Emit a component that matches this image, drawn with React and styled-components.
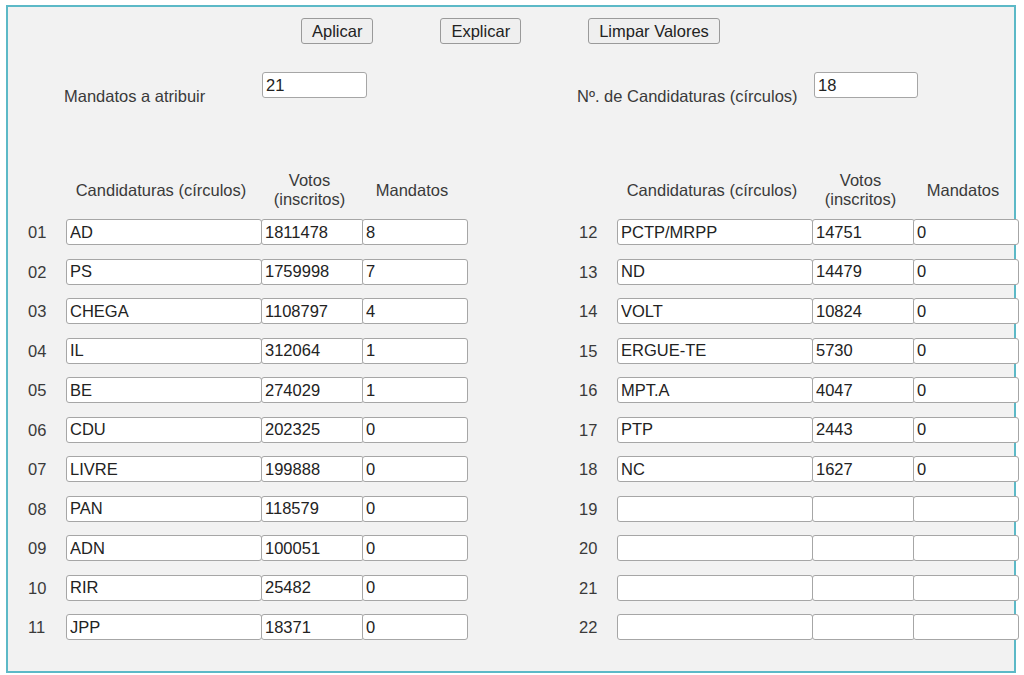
import React from 'react';
import styled, { createGlobalStyle } from 'styled-components';

const GlobalStyle = createGlobalStyle`
  body {
    margin: 0;
    background: #ffffff;
    font-family: "Liberation Sans", Arial, sans-serif;
  }
`;

const Panel = styled.div`
  box-sizing: border-box;
  margin: 5px 0 0 6px;
  width: 1010px;
  height: 668px;
  border: 2px solid #5cb9c7;
  background: #f2f2f2;
  padding-top: 11px;
  color: #3a3a3a;
  font-size: 16.5px;
`;

const ButtonBar = styled.div`
  display: flex;
  padding-left: 293px;
  gap: 67px;
`;

const Button = styled.button`
  box-sizing: border-box;
  height: 26px;
  padding: 0 10px;
  font-family: "Liberation Sans", Arial, sans-serif;
  font-size: 16.5px;
  color: #222;
  background: #efefef;
  border: 1px solid #9a9a9a;
  border-radius: 3px;
`;

const SettingsRow = styled.div`
  display: flex;
  margin-top: 28px;
  padding-left: 56px;
`;

const Setting = styled.div`
  display: flex;
  align-items: flex-start;
  margin-left: ${p => p.$offset || 0}px;
`;

const SettingLabel = styled.span`
  width: ${p => p.$width}px;
  margin-top: 15px;
  line-height: 19px;
`;

const TextBox = styled.input`
  box-sizing: border-box;
  width: ${p => p.$width ? `${p.$width}px` : '100%'};
  height: 26px;
  padding: 0 3px;
  font-family: "Liberation Sans", Arial, sans-serif;
  font-size: 16.5px;
  color: #222;
  background: #fff;
  border: 1px solid #a6a6a6;
  border-radius: 3px;
  outline: none;
`;

const Columns = styled.div`
  display: flex;
  gap: 112px;
  margin-top: 65px;
  padding-left: 20px;
`;

const Table = styled.div`
  display: flex;
  flex-direction: column;
`;

const Header = styled.div`
  display: grid;
  grid-template-columns: 38px 196px 101px 104px;
  align-items: center;
  height: 38px;
`;

const HeadCell = styled.div`
  text-align: center;
  line-height: 19px;
  padding-right: 6px;
`;

const Body = styled.div`
  display: grid;
  grid-template-columns: 38px 196px 101px 104px;
  row-gap: 13.5px;
  margin-top: 10px;
  align-items: center;
`;

const RowNum = styled.span`
  line-height: 26px;
`;

const Cell = styled.div`
  margin-left: ${p => p.$join ? '-1px' : '0'};
`;

const left = [
  ['01', 'AD', '1811478', '8'],
  ['02', 'PS', '1759998', '7'],
  ['03', 'CHEGA', '1108797', '4'],
  ['04', 'IL', '312064', '1'],
  ['05', 'BE', '274029', '1'],
  ['06', 'CDU', '202325', '0'],
  ['07', 'LIVRE', '199888', '0'],
  ['08', 'PAN', '118579', '0'],
  ['09', 'ADN', '100051', '0'],
  ['10', 'RIR', '25482', '0'],
  ['11', 'JPP', '18371', '0'],
];

const right = [
  ['12', 'PCTP/MRPP', '14751', '0'],
  ['13', 'ND', '14479', '0'],
  ['14', 'VOLT', '10824', '0'],
  ['15', 'ERGUE-TE', '5730', '0'],
  ['16', 'MPT.A', '4047', '0'],
  ['17', 'PTP', '2443', '0'],
  ['18', 'NC', '1627', '0'],
  ['19', '', '', ''],
  ['20', '', '', ''],
  ['21', '', '', ''],
  ['22', '', '', ''],
];

const PartyTable = ({ rows }) => (
  <Table>
    <Header>
      <span />
      <HeadCell>Candidaturas (círculos)</HeadCell>
      <HeadCell>Votos<br />(inscritos)</HeadCell>
      <HeadCell>Mandatos</HeadCell>
    </Header>
    <Body>
      {rows.map(([n, name, votes, seats]) => (
        <React.Fragment key={n}>
          <RowNum>{n}</RowNum>
          <Cell><TextBox defaultValue={name} /></Cell>
          <Cell $join><TextBox defaultValue={votes} style={{ width: 'calc(100% + 1px)' }} /></Cell>
          <Cell $join><TextBox defaultValue={seats} style={{ width: 'calc(100% + 1px)' }} /></Cell>
        </React.Fragment>
      ))}
    </Body>
  </Table>
);

const App = () => (
  <>
    <GlobalStyle />
    <Panel>
      <ButtonBar>
        <Button>Aplicar</Button>
        <Button>Explicar</Button>
        <Button>Limpar Valores</Button>
      </ButtonBar>
      <SettingsRow>
        <Setting>
          <SettingLabel $width={198}>Mandatos a atribuir</SettingLabel>
          <TextBox $width={105} defaultValue="21" />
        </Setting>
        <Setting $offset={210}>
          <SettingLabel $width={237}>Nº. de Candidaturas (círculos)</SettingLabel>
          <TextBox $width={104} defaultValue="18" />
        </Setting>
      </SettingsRow>
      <Columns>
        <PartyTable rows={left} />
        <PartyTable rows={right} />
      </Columns>
    </Panel>
  </>
);

export default App;
